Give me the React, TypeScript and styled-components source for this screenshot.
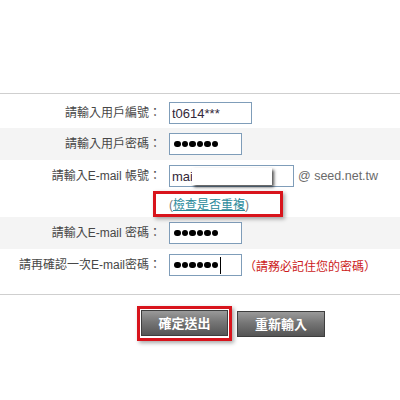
import React from 'react';
import styled, { createGlobalStyle } from 'styled-components';

const Global = createGlobalStyle`
  html, body { margin: 0; padding: 0; background: #ffffff; }
  body {
    width: 400px;
    height: 400px;
    overflow: hidden;
    font-family: "Liberation Sans", "Noto Sans CJK TC", sans-serif;
  }
`;

const Page = styled.div`
  padding-top: 93px;
`;

const Form = styled.div`
  border-top: 1px solid #cfcfcf;
  border-bottom: 1px solid #cfcfcf;
  padding-bottom: 12px;
`;

const Row = styled.div<{ $shade?: boolean; $h: number; $pad: number }>`
  display: grid;
  grid-template-columns: 161px 1fr;
  column-gap: 8px;
  align-items: start;
  box-sizing: border-box;
  height: ${(p) => p.$h}px;
  padding-top: ${(p) => p.$pad}px;
  background: ${(p) => (p.$shade ? '#f4f4f4' : '#ffffff')};
`;

const Label = styled.div`
  text-align: right;
  font-size: 12px;
  line-height: 22px;
  color: #474747;
  white-space: nowrap;
`;

const Field = styled.div`
  display: flex;
  flex-direction: column;
  align-items: flex-start;
`;

const Line = styled.div`
  display: flex;
  align-items: center;
`;

const InputWrap = styled.div`
  position: relative;
`;

const TextInput = styled.input<{ $w: number }>`
  box-sizing: border-box;
  width: ${(p) => p.$w}px;
  height: 22px;
  margin: 0;
  padding: 0 2px;
  border: 1px solid #7f9db9;
  background: #ffffff;
  font-family: "Liberation Sans", sans-serif;
  font-size: 13px;
  color: #33283a;
  outline: none;
`;

const PasswordBox = styled.div<{ $w: number }>`
  box-sizing: border-box;
  width: ${(p) => p.$w}px;
  height: 22px;
  border: 1px solid #7f9db9;
  background: #ffffff;
  display: flex;
  align-items: center;
  padding-left: 4px;
  gap: 1px;
`;

const Dot = styled.span`
  width: 6.5px;
  height: 6.5px;
  border-radius: 50%;
  background: #000000;
`;

const Caret = styled.span`
  width: 1px;
  height: 17px;
  background: #000000;
  margin-left: 1px;
`;

const Mask = styled.div`
  position: absolute;
  left: 23px;
  top: 3px;
  width: 80px;
  height: 17px;
  background: #ffffff;
  box-shadow: 2px 2px 3px rgba(0, 0, 0, 0.7);
`;

const Suffix = styled.span`
  margin-left: 4px;
  font-size: 12.5px;
  color: #6a6a6a;
  white-space: nowrap;
`;

const Note = styled.span`
  margin-left: 2px;
  font-size: 12px;
  color: #cc1a1a;
  white-space: nowrap;
`;

const LinkLine = styled.div`
  position: relative;
  margin-top: 8px;
  font-size: 12px;
  line-height: 20px;
  color: #7a7a7a;
  white-space: nowrap;
`;

const CheckLink = styled.a`
  color: #2b8a9b;
  text-decoration: underline;
  cursor: pointer;
`;

const RedFrame = styled.div`
  position: absolute;
  left: -16px;
  top: -4px;
  width: 130px;
  height: 26px;
  box-sizing: border-box;
  border: 3px solid #d8141c;
  box-shadow: 2px 2px 4px rgba(0, 0, 0, 0.35);
  pointer-events: none;
`;

const Buttons = styled.div`
  display: flex;
  align-items: center;
  gap: 5px;
  margin-top: 11px;
  padding-left: 137px;
`;

const Highlight = styled.div`
  border: 3px solid #d8141c;
  padding: 1px 1px 2px 1px;
  box-shadow: 2px 2px 4px rgba(0, 0, 0, 0.35);
`;

const Button = styled.button<{ $w: number }>`
  display: block;
  box-sizing: border-box;
  width: ${(p) => p.$w}px;
  height: 26px;
  margin: 0;
  padding: 0;
  border: 1px solid #3e3e3e;
  background: linear-gradient(to bottom, #9a9a9a 0%, #767676 45%, #555555 100%);
  color: #ffffff;
  font-family: "Noto Sans CJK TC", sans-serif;
  font-weight: 700;
  font-size: 13px;
  line-height: 24px;
  cursor: pointer;
`;

const Dots = ({ n }: { n: number }) => (
  <>
    {Array.from({ length: n }).map((_, i) => (
      <Dot key={i} />
    ))}
  </>
);

export default function App() {
  return (
    <>
      <Global />
      <Page>
        <Form>
          <Row $h={34} $pad={8}>
            <Label>請輸入用戶編號：</Label>
            <Field>
              <TextInput $w={83} value="t0614***" readOnly />
            </Field>
          </Row>
          <Row $shade $h={32} $pad={5}>
            <Label>請輸入用戶密碼：</Label>
            <Field>
              <PasswordBox $w={73}>
                <Dots n={6} />
              </PasswordBox>
            </Field>
          </Row>
          <Row $h={57} $pad={5}>
            <Label>請輸入E-mail 帳號：</Label>
            <Field>
              <Line>
                <InputWrap>
                  <TextInput $w={125} value="mai" readOnly />
                  <Mask />
                </InputWrap>
                <Suffix>@ seed.net.tw</Suffix>
              </Line>
              <LinkLine>
                (<CheckLink>檢查是否重複</CheckLink>)
                <RedFrame />
              </LinkLine>
            </Field>
          </Row>
          <Row $shade $h={32} $pad={5}>
            <Label>請輸入E-mail 密碼：</Label>
            <Field>
              <PasswordBox $w={73}>
                <Dots n={6} />
              </PasswordBox>
            </Field>
          </Row>
          <Row $h={33} $pad={5}>
            <Label>請再確認一次E-mail密碼：</Label>
            <Field>
              <Line>
                <PasswordBox $w={73}>
                  <Dots n={6} />
                  <Caret />
                </PasswordBox>
                <Note>（請務必記住您的密碼）</Note>
              </Line>
            </Field>
          </Row>
        </Form>
        <Buttons>
          <Highlight>
            <Button $w={87}>確定送出</Button>
          </Highlight>
          <Button $w={88}>重新輸入</Button>
        </Buttons>
      </Page>
    </>
  );
}
